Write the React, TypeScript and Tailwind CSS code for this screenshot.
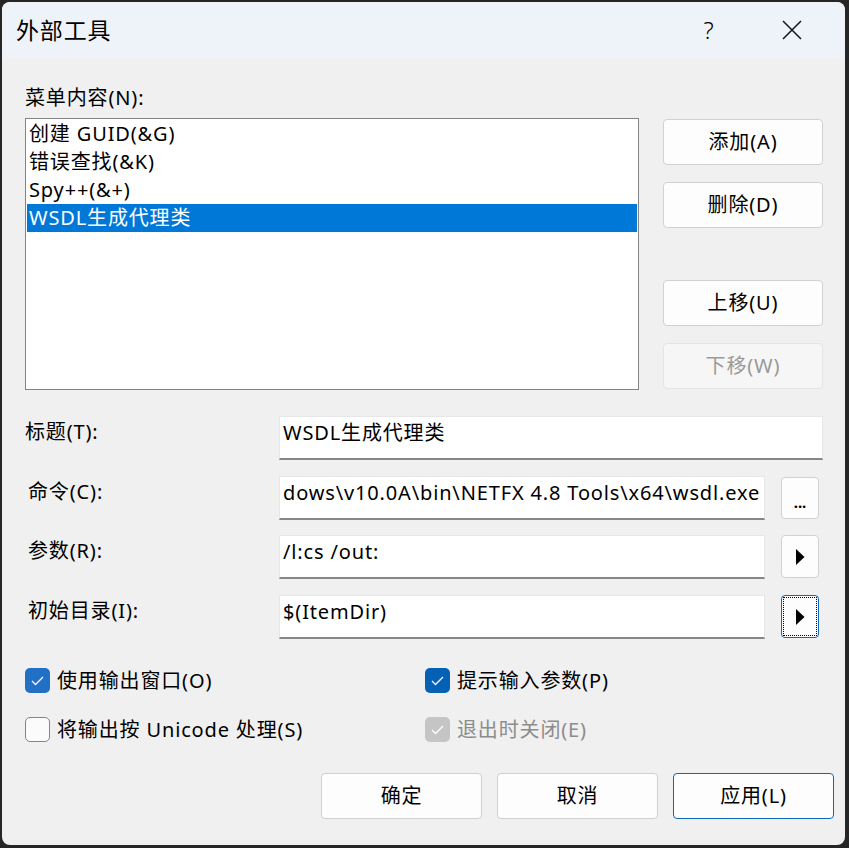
import React from "react";

const items = ["创建 GUID(&G)", "错误查找(&K)", "Spy++(&+)", "WSDL生成代理类"];

function Btn({
  label,
  className = "",
  disabled = false,
  primary = false,
}: {
  label: React.ReactNode;
  className?: string;
  disabled?: boolean;
  primary?: boolean;
}) {
  return (
    <button
      type="button"
      disabled={disabled}
      className={
        "flex items-center justify-center rounded-[4px] border text-[20px] leading-[28px] " +
        (disabled
          ? "bg-[#f6f6f6] border-[#e4e4e4] text-[#9a9a9a] "
          : primary
          ? "bg-[#fdfdfd] border-[#0f66c0] text-black "
          : "bg-[#fdfdfd] border-[#d1d1d1] text-black ") +
        className
      }
    >
      {label}
    </button>
  );
}

function Triangle() {
  return (
    <svg width="9" height="16" viewBox="0 0 9 16">
      <polygon points="0,0 8.5,8 0,16" fill="#000" />
    </svg>
  );
}

function Field({
  label,
  value,
  wide = false,
  labelPad = "pl-[3px]",
  className = "",
  side,
}: {
  label: string;
  value: string;
  wide?: boolean;
  labelPad?: string;
  className?: string;
  side?: React.ReactNode;
}) {
  return (
    <div className={"flex h-[44px] " + className}>
      <div className={"w-[254px] pt-[2px] " + labelPad}>{label}</div>
      <div
        className={
          "h-[44px] bg-white border border-[#e6e6e6] border-b-[#868686] border-b-2 pl-[3px] pt-[2px] overflow-hidden whitespace-nowrap " +
          (wide ? "w-[544px]" : "w-[486px]")
        }
      >
        {value}
      </div>
      {side}
    </div>
  );
}

function Check({
  label,
  checked,
  disabled = false,
  tone = "bg-[#2170c6]",
}: {
  label: string;
  checked: boolean;
  disabled?: boolean;
  tone?: string;
}) {
  return (
    <div className="flex items-center h-[25px]">
      <div
        className={
          "w-[25px] h-[25px] rounded-[5px] flex items-center justify-center " +
          (checked
            ? disabled
              ? "bg-[#c5c5c5]"
              : tone
            : "bg-[#fbfbfb] border border-[#858585]")
        }
      >
        {checked && (
          <svg width="13" height="10" viewBox="0 0 13 10">
            <polyline
              points="1,5 4.5,8.5 12,1"
              fill="none"
              stroke="#fff"
              strokeWidth="1.3"
            />
          </svg>
        )}
      </div>
      <span className={"ml-[7px] " + (disabled ? "text-[#8c8c8c]" : "text-black")}>
        {label}
      </span>
    </div>
  );
}

export default function App() {
  return (
    <div className="w-[849px] h-[848px] bg-[#262626] pt-[2px] pl-[2px] font-['Noto_Sans','Noto_Sans_CJK_SC',sans-serif] text-[20px] leading-[28px] tracking-[0.85px] text-black">
      <div className="w-[843px] h-[843px] rounded-[8px] overflow-hidden bg-[#f0f0f0] flex flex-col">
        {/* title bar */}
        <div className="h-[56px] bg-[#eef3f9] flex items-center">
          <div className="pl-[14px] text-[23px] leading-[30px] flex-1">外部工具</div>
          <div className="w-[40px] text-center text-[24px] font-light mr-[53px]">?</div>
          <svg width="20" height="20" viewBox="0 0 20 20" className="mr-[43px]">
            <path d="M1 1 L19 19 M19 1 L1 19" stroke="#1a1a1a" strokeWidth="1.6" />
          </svg>
        </div>

        <div className="flex flex-col pl-[23px]">
          <div className="mt-[26px] h-[28px]">菜单内容(N):</div>

          <div className="flex mt-[6px]">
            <div className="w-[614px] h-[272px] bg-white border border-[#838383] p-[1px]">
              {items.map((it, i) => (
                <div
                  key={it}
                  className={
                    "h-[28px] pl-[2px] leading-[28px] " +
                    (i === 3 ? "bg-[#0078d7] text-white" : "")
                  }
                >
                  {it}
                </div>
              ))}
            </div>
            <div className="ml-[24px] flex flex-col">
              <Btn label="添加(A)" className="w-[160px] h-[46px] mt-[1px]" />
              <Btn label="删除(D)" className="w-[160px] h-[46px] mt-[17px]" />
              <Btn label="上移(U)" className="w-[160px] h-[46px] mt-[52px]" />
              <Btn label="下移(W)" disabled className="w-[160px] h-[46px] mt-[17px]" />
            </div>
          </div>

          <div className="mt-[26px] flex flex-col">
            <Field label="标题(T):" value="WSDL生成代理类" wide labelPad="pl-0" />
            <Field
              className="mt-[16px]"
              label="命令(C):"
              value="dows\v10.0A\bin\NETFX 4.8 Tools\x64\wsdl.exe"
              side={
                <Btn
                  label={<span className="text-[15px] leading-none font-bold tracking-normal relative top-[4px]">...</span>}
                  className="w-[38px] h-[42px] ml-[16px] mt-[1px]"
                />
              }
            />
            <Field
              className="mt-[15px]"
              label="参数(R):"
              value="/l:cs /out:"
              side={<Btn label={<Triangle />} className="w-[38px] h-[43px] ml-[16px]" />}
            />
            <Field
              className="mt-[16px]"
              label="初始目录(I):"
              value="$(ItemDir)"
              side={
                <div className="w-[38px] h-[43px] ml-[16px] rounded-[4px] border border-[#0f66c0] bg-[#fdfdfd] p-[1px]">
                  <div className="w-full h-full border border-dotted border-black flex items-center justify-center">
                    <Triangle />
                  </div>
                </div>
              }
            />
          </div>

          <div className="mt-[29px] grid grid-cols-[400px_1fr] gap-y-[24px]">
            <Check label="使用输出窗口(O)" checked />
            <Check label="提示输入参数(P)" checked tone="bg-[#0461b6]" />
            <Check label="将输出按 Unicode 处理(S)" checked={false} />
            <Check label="退出时关闭(E)" checked disabled />
          </div>

          <div className="mt-[31px] flex justify-end pr-[11px] gap-[15px]">
            <Btn label="确定" className="w-[161px] h-[46px]" />
            <Btn label="取消" className="w-[161px] h-[46px]" />
            <Btn label="应用(L)" primary className="w-[161px] h-[46px]" />
          </div>
        </div>
      </div>
    </div>
  );
}
